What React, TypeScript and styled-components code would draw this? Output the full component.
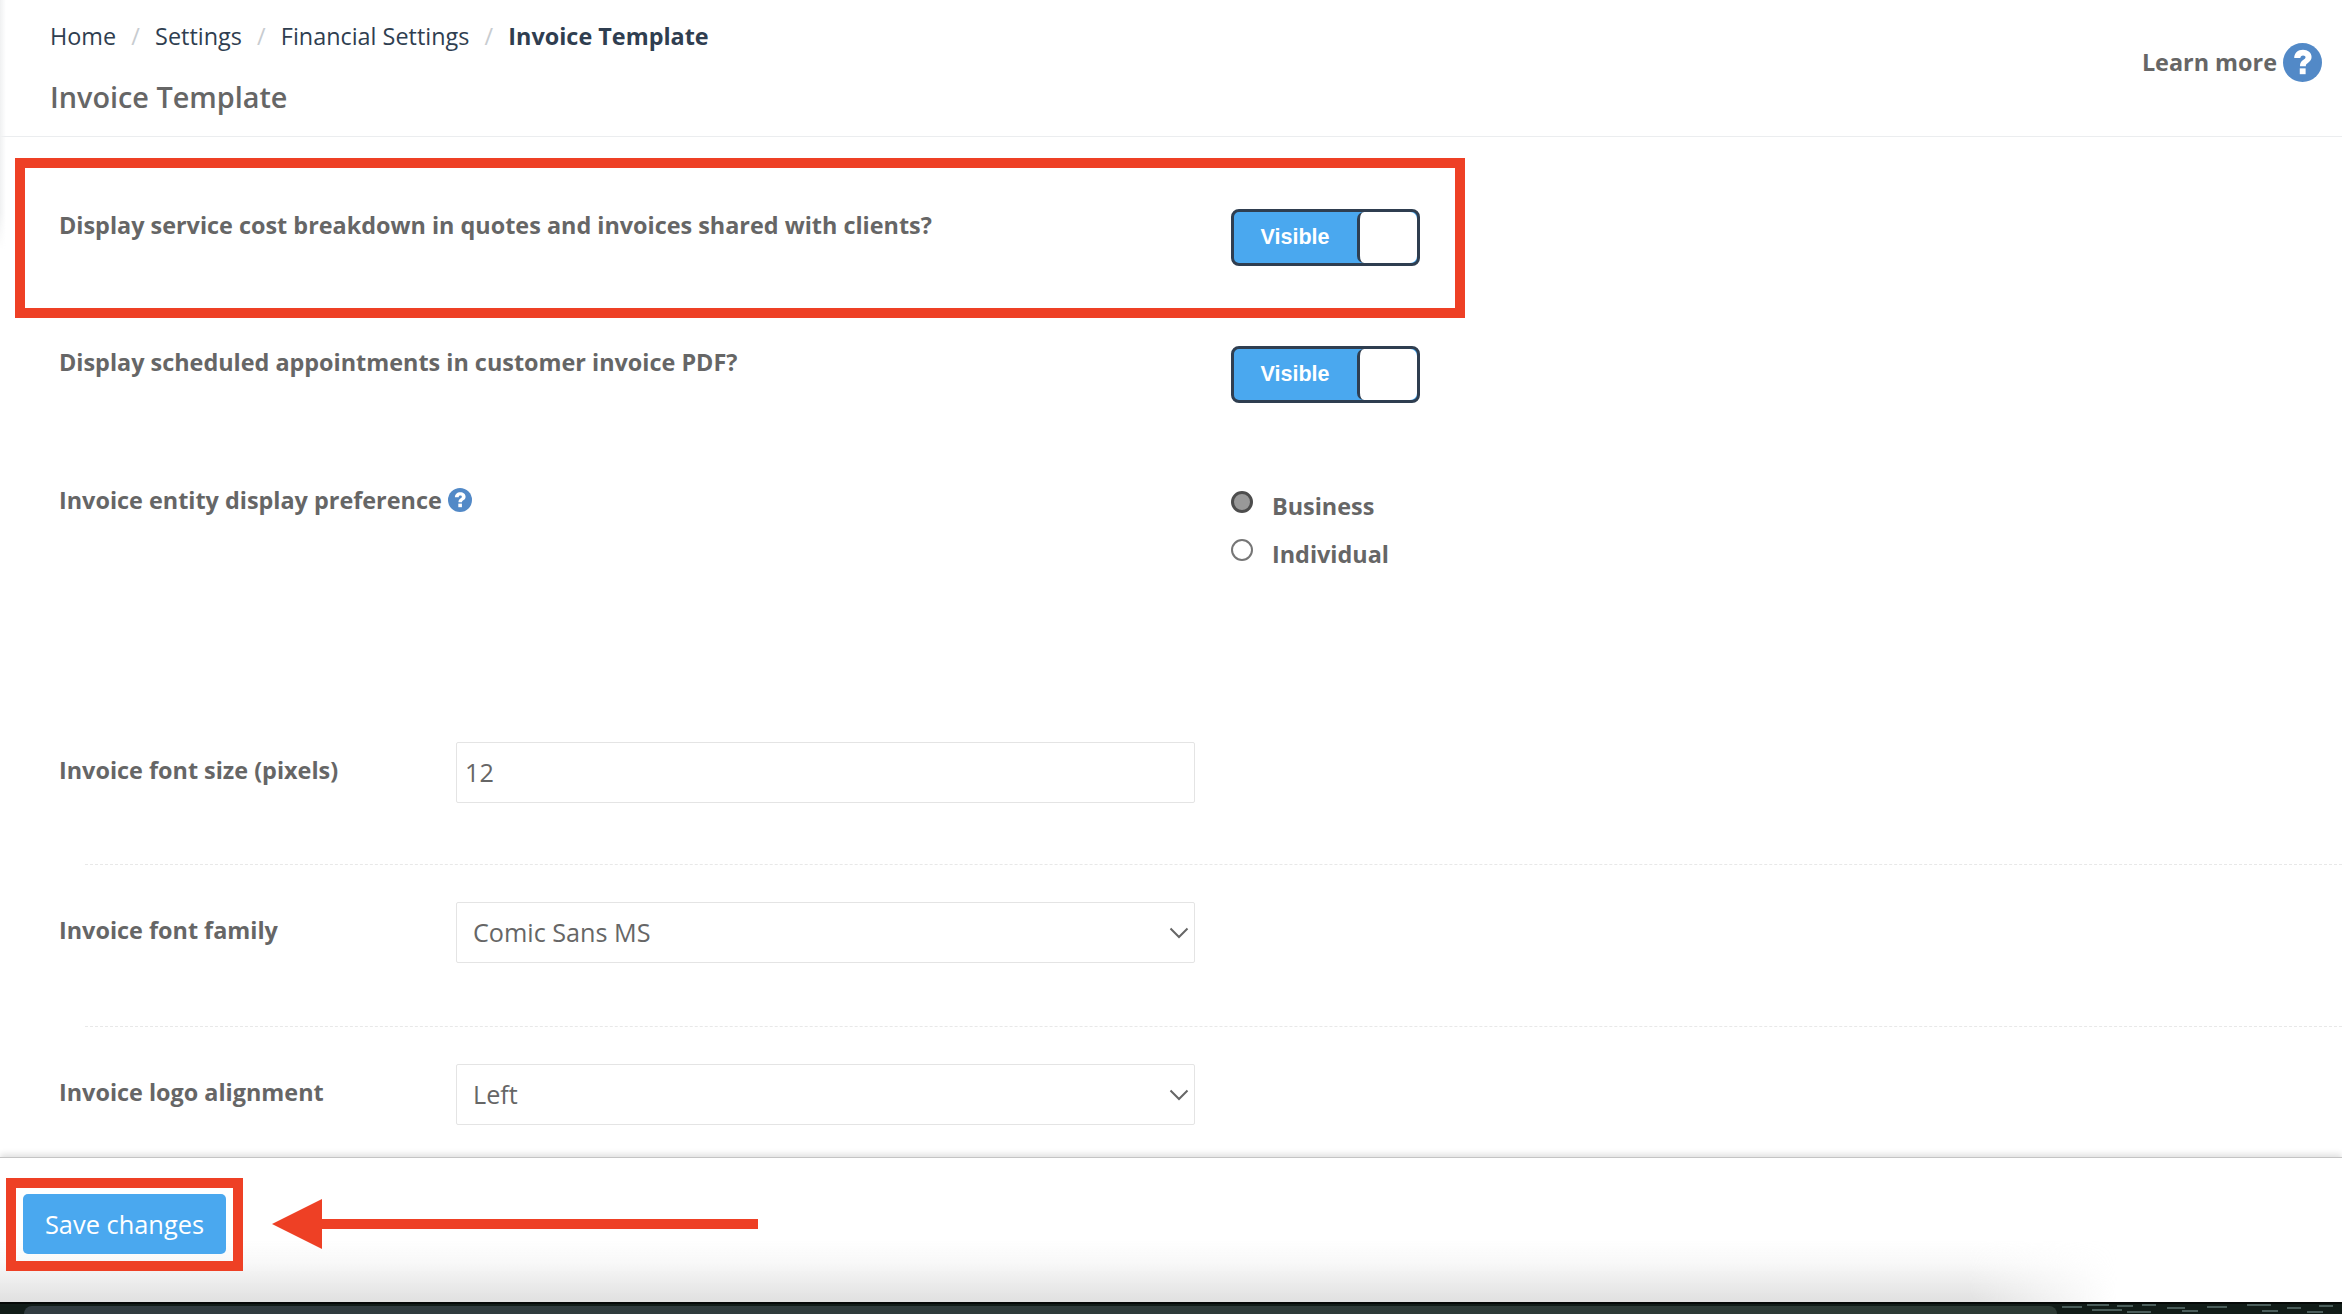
import React from "react";
import styled, { createGlobalStyle } from "styled-components";

const Global = createGlobalStyle`
  html, body { margin: 0; padding: 0; background: #fff; }
  body { font-family: "Open Sans", "Liberation Sans", sans-serif; color: #666; }
  * { box-sizing: border-box; }
`;

const Page = styled.div`
  position: relative;
  width: 2342px;
  height: 1314px;
  overflow: hidden;
  display: flex;
  flex-direction: column;
  background: #fff;

  &::before {
    content: "";
    position: absolute;
    left: 0;
    top: 0;
    width: 6px;
    height: 250px;
    background: linear-gradient(90deg, #f0f1f2, rgba(255, 255, 255, 0));
    -webkit-mask-image: linear-gradient(180deg, #000 85%, transparent);
    mask-image: linear-gradient(180deg, #000 85%, transparent);
  }
`;

const Header = styled.header`
  height: 137px;
  flex: none;
  padding: 17px 20px 0 50px;
  border-bottom: 1px solid #ebedef;
  display: flex;
  justify-content: space-between;
`;

const HeaderText = styled.div`
  display: flex;
  flex-direction: column;
  gap: 20px;
`;

const Crumbs = styled.nav`
  display: flex;
  align-items: center;
  font-size: 23.4px;
  line-height: 38px;
  color: #2f3e50;
`;

const Crumb = styled.span<{ $current?: boolean }>`
  font-weight: ${(p) => (p.$current ? 700 : 400)};
`;

const CrumbSep = styled.span`
  color: #c8ccd0;
  width: 39px;
  text-align: center;
`;

const Title = styled.h1`
  margin: 0;
  font-size: 28.8px;
  line-height: 44px;
  font-weight: 600;
  color: #666;
`;

const LearnMore = styled.a`
  display: flex;
  align-items: center;
  gap: 6px;
  height: 40px;
  margin-top: 25px;
  font-size: 23.4px;
  font-weight: 700;
  color: #666;
`;

const HelpIcon = styled.svg`
  flex: none;
`;

const Content = styled.main`
  flex: 1;
  min-height: 0;
  padding-left: 59px;
  display: flex;
  flex-direction: column;
`;

const OptionRow = styled.section<{ $height: number; $top: number }>`
  height: ${(p) => p.$height}px;
  padding-top: ${(p) => p.$top}px;
  flex: none;
  display: flex;
  align-items: flex-start;
`;

const Label = styled.div`
  font-size: 23.4px;
  line-height: 36px;
  font-weight: 700;
  color: #666;
  display: flex;
  align-items: center;
  gap: 6px;
`;

const OptionLabel = styled(Label)<{ $lift?: number }>`
  width: 1172px;
  flex: none;
  margin-top: ${(p) => -(p.$lift ?? 0)}px;
`;

const Toggle = styled.div`
  width: 189px;
  height: 57px;
  border: 3px solid #2f3e50;
  border-radius: 8px;
  background: #4aa8ef;
  display: flex;
  overflow: hidden;
  font-family: "Liberation Sans", Arial, sans-serif;
`;

const ToggleText = styled.span`
  width: 123px;
  padding-right: 1px;
  text-align: center;
  color: #fff;
  font-size: 21.5px;
  font-weight: 700;
  line-height: 51px;
`;

const ToggleKnob = styled.span`
  flex: 1;
  background: #fff;
  border-left: 3px solid #2f3e50;
  border-radius: 7px;
`;

const RadioGroup = styled.div`
  display: flex;
  flex-direction: column;
  gap: 12px;
  margin-top: 6px;
`;

const RadioOption = styled.label`
  display: flex;
  align-items: center;
  gap: 19px;
  font-size: 23.4px;
  line-height: 36px;
  font-weight: 700;
  color: #666;
`;

const RadioDot = styled.span<{ $on?: boolean }>`
  width: 22px;
  height: 22px;
  border-radius: 50%;
  margin-top: -8px;
  border: ${(p) => (p.$on ? "3px solid #4d4d4d" : "2px solid #767676")};
  background: ${(p) => (p.$on ? "#999" : "#fff")};
`;

const FieldRow = styled.section<{ $height?: number; $top: number }>`
  ${(p) => (p.$height ? `height: ${p.$height}px; flex: none;` : "flex: 1;")}
  padding-top: ${(p) => p.$top}px;
  display: flex;
  align-items: flex-start;
`;

const Divider = styled.hr`
  margin: 0 0 0 26px;
  border: none;
  border-top: 1px dashed #e8e8e8;
  flex: none;
`;

const FieldLabel = styled(Label)`
  width: 397px;
  flex: none;
  padding-top: 10px;
`;

const controlStyle = `
  width: 739px;
  height: 61px;
  border: 1px solid #e4e4e4;
  border-radius: 2px;
  background: #fff;
  font-family: "Open Sans", sans-serif;
  font-size: 25.2px;
  color: #666;
  outline: none;
`;

const TextInput = styled.input`
  ${controlStyle}
  padding: 0 8px 2px;
`;

const SelectWrap = styled.div`
  position: relative;
  width: 739px;
  height: 61px;
`;

const Select = styled.select`
  ${controlStyle}
  appearance: none;
  padding: 0 16px 2px;
`;

const Chevron = styled.svg`
  position: absolute;
  right: 6px;
  top: 25px;
  width: 20px;
  height: 12px;
  pointer-events: none;
`;

const Footer = styled.footer`
  position: relative;
  height: 144px;
  flex: none;
  padding: 36px 0 0 23px;
  background: #fff;
  box-shadow: 0 -1px 0 #c4c4c4, 0 -4px 6px rgba(0, 0, 0, 0.12);
`;

const FooterFade = styled.div`
  position: absolute;
  left: 0;
  right: 225px;
  bottom: 0;
  height: 62px;
  background: linear-gradient(
    180deg,
    rgba(224, 224, 224, 0) 0,
    rgba(224, 224, 224, 0.22) 37%,
    rgba(224, 224, 224, 0.7) 76%,
    #e0e0e0 100%
  );
  -webkit-mask-image: linear-gradient(90deg, #000 93%, transparent);
  mask-image: linear-gradient(90deg, #000 93%, transparent);
`;

const SaveButton = styled.button`
  position: relative;
  z-index: 1;
  width: 203px;
  height: 60px;
  padding: 0;
  border: none;
  border-radius: 5px;
  background: #4aa8ef;
  color: #fff;
  font-family: "Open Sans", sans-serif;
  font-size: 25.4px;
  font-weight: 400;
`;

const Desktop = styled.div`
  position: relative;
  height: 12px;
  flex: none;
  background: #111c18;
  border-top: 2px solid #060908;
  padding: 2px 0 0 24px;
`;

const Dock = styled.div`
  width: 2033px;
  height: 8px;
  background: linear-gradient(90deg, #313c41, #2c3a34);
  border-radius: 10px 10px 0 0;
`;

const DesktopTexture = styled.svg`
  position: absolute;
  right: 0;
  top: 0;
  width: 285px;
  height: 10px;
`;

const RedBox = styled.div<{ $x: number; $y: number; $w: number; $h: number }>`
  position: absolute;
  left: ${(p) => p.$x}px;
  top: ${(p) => p.$y}px;
  width: ${(p) => p.$w}px;
  height: ${(p) => p.$h}px;
  border: 10px solid #ee4025;
  pointer-events: none;
`;

const Arrow = styled.svg`
  position: absolute;
  left: 272px;
  top: 1199px;
  width: 486px;
  height: 50px;
  pointer-events: none;
`;

const Help = ({ size }: { size: number }) => (
  <HelpIcon width={size} height={size} viewBox="0 0 40 40">
    <circle cx="20" cy="20" r="20" fill="#5289c7" />
    <path
      d="M11.5 15.5c0-5 3.6-8.5 9-8.5 5 0 8.8 3 8.8 7.4 0 3.2-1.8 4.7-3.8 6-1.5 1-2.1 1.6-2.1 3.4h-6c0-3.4 1.2-5 3.3-6.4 1.4-.9 2.4-1.6 2.4-2.8 0-1.2-1-1.9-2.5-1.9-1.7 0-2.7 1-2.8 2.8z"
      fill="#fff"
    />
    <rect x="17.2" y="26" width="6" height="6" fill="#fff" />
  </HelpIcon>
);

const ChevronIcon = () => (
  <Chevron viewBox="0 0 20 12" fill="none" stroke="#666" strokeWidth="2">
    <path d="M1.5 1.5 10 10l8.5-8.5" />
  </Chevron>
);

const VisibleToggle = () => (
  <Toggle>
    <ToggleText>Visible</ToggleText>
    <ToggleKnob />
  </Toggle>
);

const ignore = () => {};

export default function App() {
  return (
    <Page>
      <Global />
      <Header>
        <HeaderText>
          <Crumbs>
            <Crumb>Home</Crumb>
            <CrumbSep>/</CrumbSep>
            <Crumb>Settings</Crumb>
            <CrumbSep>/</CrumbSep>
            <Crumb>Financial Settings</Crumb>
            <CrumbSep>/</CrumbSep>
            <Crumb $current>Invoice Template</Crumb>
          </Crumbs>
          <Title>Invoice Template</Title>
        </HeaderText>
        <LearnMore>
          Learn more
          <Help size={39} />
        </LearnMore>
      </Header>
      <Content>
        <OptionRow $height={137} $top={72}>
          <OptionLabel $lift={2}>
            Display service cost breakdown in quotes and invoices shared with clients?
          </OptionLabel>
          <VisibleToggle />
        </OptionRow>
        <OptionRow $height={137} $top={72}>
          <OptionLabel $lift={2}>Display scheduled appointments in customer invoice PDF?</OptionLabel>
          <VisibleToggle />
        </OptionRow>
        <OptionRow $height={331} $top={71}>
          <OptionLabel>
            Invoice entity display preference
            <Help size={24} />
          </OptionLabel>
          <RadioGroup>
            <RadioOption>
              <RadioDot $on />
              Business
            </RadioOption>
            <RadioOption>
              <RadioDot />
              Individual
            </RadioOption>
          </RadioGroup>
        </OptionRow>
        <FieldRow $height={122} $top={0}>
          <FieldLabel>Invoice font size (pixels)</FieldLabel>
          <TextInput value="12" onChange={ignore} />
        </FieldRow>
        <Divider />
        <FieldRow $height={161} $top={37}>
          <FieldLabel>Invoice font family</FieldLabel>
          <SelectWrap>
            <Select defaultValue="Comic Sans MS">
              <option>Comic Sans MS</option>
              <option>Arial</option>
            </Select>
            <ChevronIcon />
          </SelectWrap>
        </FieldRow>
        <Divider />
        <FieldRow $top={37}>
          <FieldLabel>Invoice logo alignment</FieldLabel>
          <SelectWrap>
            <Select defaultValue="Left">
              <option>Left</option>
              <option>Center</option>
              <option>Right</option>
            </Select>
            <ChevronIcon />
          </SelectWrap>
        </FieldRow>
      </Content>
      <Footer>
        <FooterFade />
        <SaveButton>Save changes</SaveButton>
      </Footer>
      <Desktop>
        <Dock />
        <DesktopTexture viewBox="0 0 285 10" stroke="#5d7370" strokeWidth="1.5">
          <path d="M5 3h20M30 1h22M35 6h30M60 2h16M70 8h24M85 1h14M110 4h18M125 7h16M150 3h20M190 1h24M205 7h16M230 4h14M250 8h16M262 2h14" />
        </DesktopTexture>
      </Desktop>
      <RedBox $x={15} $y={158} $w={1450} $h={160} />
      <RedBox $x={6} $y={1178} $w={237} $h={93} />
      <Arrow viewBox="0 0 486 50" fill="#ee4025">
        <path d="M0 25 50 0v20h436v10H50v20z" />
      </Arrow>
    </Page>
  );
}
